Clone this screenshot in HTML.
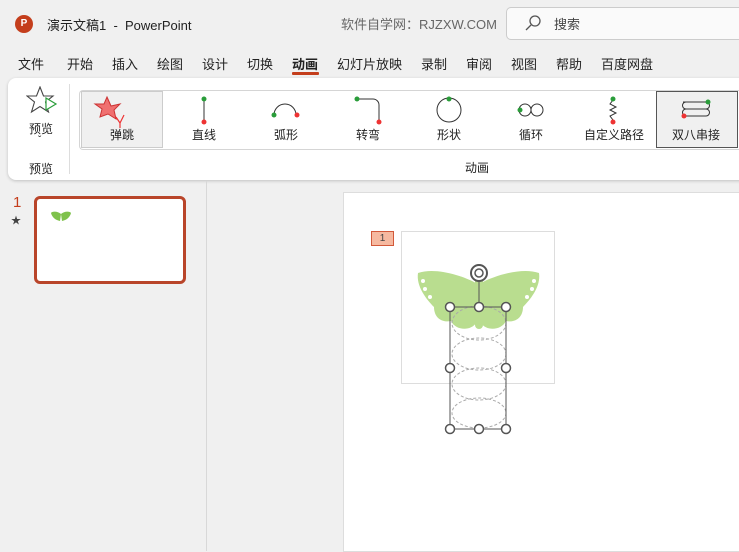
<!DOCTYPE html><html><head><meta charset="utf-8"><style>
*{margin:0;padding:0;box-sizing:border-box}
body{width:739px;height:548px;overflow:hidden;background:#f0f0f0;font-family:"Liberation Sans","Noto Sans CJK SC",sans-serif;color:#222;position:relative;font-size:13px}
.a{position:absolute;white-space:nowrap}
.tab{position:absolute;top:54px;font-size:13px;white-space:nowrap}
.lbl{position:absolute;top:126px;font-size:12px;transform:translateX(-50%);white-space:nowrap}
</style></head><body>
<div class="a" style="left:15px;top:15px;width:18px;height:18px;border-radius:50%;background:#c43e1c;color:#fff;font-size:10px;font-weight:bold;text-align:center;line-height:18px">P</div>
<div class="a" style="left:47px;top:15px;font-size:13px">演示文稿1&nbsp; - &nbsp;PowerPoint</div>
<div class="a" style="left:341px;top:14px;font-size:13px;color:#666">软件自学网：RJZXW.COM</div>
<div class="a" style="left:506px;top:7px;width:240px;height:33px;background:#fafafa;border:1px solid #ccc;border-radius:5px"></div>
<svg class="a" style="left:524px;top:14px" width="18" height="18"><circle cx="11" cy="7" r="5" fill="none" stroke="#555" stroke-width="1.3"/><line x1="7" y1="11" x2="2" y2="16" stroke="#555" stroke-width="1.3"/></svg>
<div class="a" style="left:554px;top:14px;font-size:13px;color:#444">搜索</div>
<div class="tab" style="left:18px">文件</div><div class="tab" style="left:67px">开始</div><div class="tab" style="left:112px">插入</div><div class="tab" style="left:157px">绘图</div><div class="tab" style="left:202px">设计</div><div class="tab" style="left:247px">切换</div><div class="tab" style="left:292px;font-weight:bold">动画</div><div class="tab" style="left:337px">幻灯片放映</div><div class="tab" style="left:421px">录制</div><div class="tab" style="left:466px">审阅</div><div class="tab" style="left:511px">视图</div><div class="tab" style="left:556px">帮助</div><div class="tab" style="left:601px">百度网盘</div>
<div class="a" style="left:292px;top:72px;width:27px;height:3px;background:#c43e1c;border-radius:1px"></div>
<div class="a" style="left:8px;top:78px;width:740px;height:102px;background:#fff;border-radius:8px;box-shadow:0 1px 3px rgba(0,0,0,.2)"></div>
<svg class="a" style="left:26px;top:86px" width="34" height="30"><polygon points="14,1 17.5,10 27,10 19.5,16 22.5,26 14,20.5 5.5,26 8.5,16 1,10 10.5,10" fill="none" stroke="#444" stroke-width="1.1"/><polygon points="20,12 30,18 20,24" fill="#fff" stroke="#2a9d3a" stroke-width="1.2"/></svg>
<div class="a" style="left:29px;top:120px;font-size:12px">预览</div>
<div class="a" style="left:38px;top:135px;font-size:10px">ˇ</div>
<div class="a" style="left:29px;top:160px;font-size:12px">预览</div>
<div class="a" style="left:69px;top:84px;width:1px;height:90px;background:#ddd"></div>
<div class="a" style="left:79px;top:90px;width:670px;height:60px;border:1px solid #d5d5d5;border-radius:4px;border-right:none"></div>
<div class="a" style="left:81px;top:91px;width:82px;height:57px;background:#f0f0f0;border:1px solid #ccc"></div>
<div class="a" style="left:656px;top:91px;width:82px;height:57px;background:#f0f0f0;border:1px solid #555"></div>
<svg class="a" style="left:80px;top:90px" width="659" height="45">
<polygon points="27,7 31,16 40,14 34,20 36,29 28,24 20,27 22,19 15,14 24,14" fill="#f07070" stroke="#c33" stroke-width="1"/>
<path d="M36,27 L40,33 L44,25 M40,33 L40,38" stroke="#e33" fill="none" stroke-width="1.2"/>
<line x1="124" y1="9" x2="124" y2="32" stroke="#333"/><circle cx="124" cy="9" r="2.5" fill="#2a9d3a"/><circle cx="124" cy="32" r="2.5" fill="#e33"/>
<path d="M194,25 A11,11 0 0 1 216,25" fill="none" stroke="#333"/><circle cx="194" cy="25" r="2.5" fill="#2a9d3a"/><circle cx="217" cy="25" r="2.5" fill="#e33"/>
<path d="M277,9 L293,9 A6,6 0 0 1 299,15 L299,32" fill="none" stroke="#333"/><circle cx="277" cy="9" r="2.5" fill="#2a9d3a"/><circle cx="299" cy="32" r="2.5" fill="#e33"/>
<circle cx="369" cy="20" r="12" fill="none" stroke="#333"/><circle cx="369" cy="9" r="2.5" fill="#2a9d3a"/>
<circle cx="445" cy="20" r="6" fill="none" stroke="#333"/><circle cx="457" cy="20" r="6" fill="none" stroke="#333"/><circle cx="440" cy="20" r="2.5" fill="#2a9d3a"/>
<path d="M533,10 L530,14 L536,17 L530,20 L536,23 L530,26 L533,30" fill="none" stroke="#333"/><circle cx="533" cy="9" r="2.5" fill="#2a9d3a"/><circle cx="533" cy="32" r="2.5" fill="#e33"/>
<path d="M603,12 L626,12 A3.5,3.5 0 0 1 626,19 L606,19 A3.5,3.5 0 0 0 606,26 L626,26 A3.5,3.5 0 0 0 626,19 M606,19 A3.5,3.5 0 0 1 606,12" fill="none" stroke="#333"/><circle cx="628" cy="12" r="2.5" fill="#2a9d3a"/><circle cx="604" cy="26" r="2.5" fill="#e33"/>
</svg>
<div class="lbl" style="left:122px">弹跳</div><div class="lbl" style="left:204px">直线</div><div class="lbl" style="left:286px">弧形</div><div class="lbl" style="left:368px">转弯</div><div class="lbl" style="left:449px">形状</div><div class="lbl" style="left:531px">循环</div><div class="lbl" style="left:614px">自定义路径</div><div class="lbl" style="left:696px">双八串接</div>
<div class="a" style="left:465px;top:159px;font-size:12px">动画</div>
<div class="a" style="left:206px;top:181px;width:1px;height:370px;background:#d8d8d8"></div>
<div class="a" style="left:13px;top:194px;color:#c43e1c;font-size:15px">1</div>
<div class="a" style="left:11px;top:212px;font-size:10px;color:#444">★</div>
<div class="a" style="left:34px;top:196px;width:152px;height:88px;background:#fff;border:3px solid #b9452a;border-radius:6px"></div>
<svg class="a" style="left:50px;top:211px" width="22" height="13"><path d="M11,3 C8,0 2,0 1,2 C2,6 5,9 10,10 Z M11,3 C14,0 20,0 21,2 C20,6 17,9 12,10 Z" fill="#7fc24c"/></svg>
<div class="a" style="left:343px;top:192px;width:400px;height:360px;background:#fff;border:1px solid #ddd"></div>
<div class="a" style="left:371px;top:231px;width:23px;height:15px;background:#f6b9a0;border:1px solid #d2593a;font-size:10px;text-align:center;line-height:13px;color:#444">1</div>
<div class="a" style="left:401px;top:231px;width:154px;height:153px;border:1px solid #ddd"></div>
<svg class="a" style="left:401px;top:231px" width="170" height="210">
<path d="M75,52 C62,45 35,36 17,42 C15,55 25,68 33,76 C33,86 40,92 50,90 C55,100 70,100 75,92 Z" fill="#b9dd8f"/>
<path d="M80,52 C93,45 120,36 138,42 C140,55 130,68 122,76 C122,86 115,92 105,90 C100,100 85,100 80,92 Z" fill="#b9dd8f"/>
<rect x="74" y="36" width="8" height="62" fill="#b9dd8f" rx="4"/>
<g fill="#fff"><circle cx="22" cy="50" r="2"/><circle cx="24" cy="58" r="2"/><circle cx="29" cy="66" r="2"/><circle cx="133" cy="50" r="2"/><circle cx="131" cy="58" r="2"/><circle cx="126" cy="66" r="2"/></g>
<g fill="none" stroke="#aaa" stroke-dasharray="3,2"><ellipse cx="78" cy="92" rx="27" ry="17"/><ellipse cx="78" cy="123" rx="27" ry="16"/><ellipse cx="78" cy="153" rx="27" ry="16"/><ellipse cx="78" cy="182" rx="27" ry="15"/></g>
<rect x="49" y="76" width="56" height="122" fill="none" stroke="#555"/>
<line x1="78" y1="50" x2="78" y2="76" stroke="#555"/>
<circle cx="78" cy="42" r="8" fill="#fff" stroke="#555" stroke-width="2"/><circle cx="78" cy="42" r="4" fill="none" stroke="#555" stroke-width="1.5"/>
<g fill="#fff" stroke="#555" stroke-width="1.5"><circle cx="49" cy="76" r="4.5"/><circle cx="78" cy="76" r="4.5"/><circle cx="105" cy="76" r="4.5"/><circle cx="49" cy="137" r="4.5"/><circle cx="105" cy="137" r="4.5"/><circle cx="49" cy="198" r="4.5"/><circle cx="78" cy="198" r="4.5"/><circle cx="105" cy="198" r="4.5"/></g>
</svg>
</body></html>
